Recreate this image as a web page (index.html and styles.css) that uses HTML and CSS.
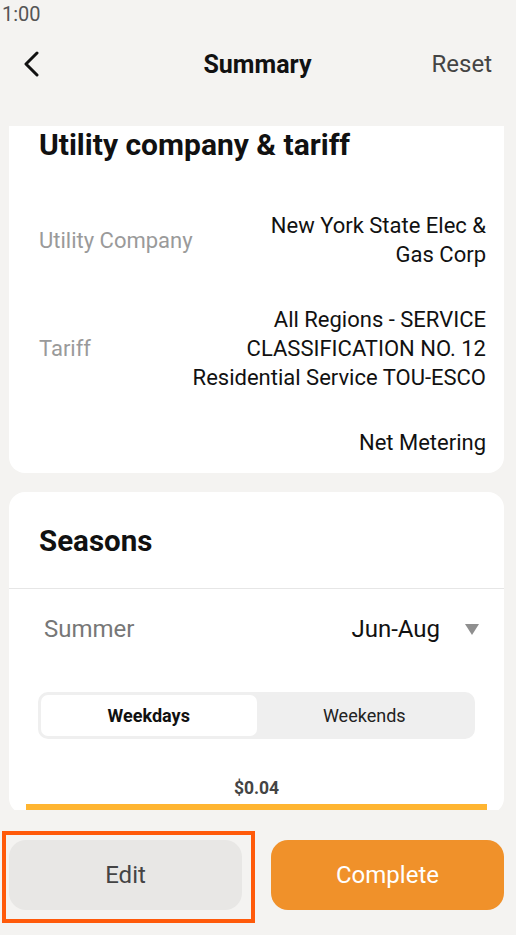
FILE: index.html
```html
<html lang="en">
<head>
    <meta charset="UTF-8">
    <meta name="viewport" content="width=device-width, initial-scale=1.0">
    <title>Summary</title>
    <link rel="stylesheet" href="styles.css">
</head>
<body>
    <div class="status">1:00</div>
    <header class="nav">
        <span class="back">
            <svg width="16" height="26" viewBox="0 0 16 26">
                <path d="M14 2 L3 13 L14 24" fill="none" stroke="#111" stroke-width="3" stroke-linecap="round" stroke-linejoin="round"/>
            </svg>
        </span>
        <h1 class="title">Summary</h1>
        <span class="reset">Reset</span>
    </header>

    <div class="scroll">
        <div class="card card-top">
            <h2 class="card-title">Utility company &amp; tariff</h2>
            <div class="row">
                <span class="label">Utility Company</span>
                <span class="value">New York State Elec &amp;<br>Gas Corp</span>
            </div>
            <div class="row">
                <span class="label">Tariff</span>
                <span class="value">All Regions - SERVICE<br>CLASSIFICATION NO. 12<br>Residential Service TOU-ESCO</span>
            </div>
            <div class="row">
                <span class="label"></span>
                <span class="value">Net Metering</span>
            </div>
        </div>

        <div class="card seasons">
            <h2 class="card-title seasons-title">Seasons</h2>
            <div class="divider"></div>
            <div class="season-row">
                <span class="season-name">Summer</span>
                <span class="season-range">Jun-Aug <i class="caret"></i></span>
            </div>
            <div class="segment">
                <div class="seg active">Weekdays</div>
                <div class="seg">Weekends</div>
            </div>
            <div class="price">$0.04</div>
            <div class="rate-bar"></div>
        </div>
    </div>

    <footer class="actions">
        <div class="btn-wrap">
            <button class="btn btn-edit">Edit</button>
            <span class="highlight"></span>
        </div>
        <div class="btn-wrap">
            <button class="btn btn-complete">Complete</button>
        </div>
    </footer>
</body>
</html>
```

FILE: styles.css
```css
*{
    box-sizing: border-box;
    margin: 0;
}
body{
    width: 516px;
    height: 935px;
    overflow: hidden;
    background: #f4f3f1;
    font-family: Roboto, "Liberation Sans", sans-serif;
    color: #111;
}
.status{
    height: 28px;
    padding: 0 0 0 2px;
    font-size: 20px;
    line-height: 28px;
    color: #555;
}
.nav{
    height: 72px;
    display: grid;
    grid-template-columns: 1fr auto 1fr;
    align-items: center;
    padding: 0 24px 0 23px;
}
.back{
    display: flex;
}
.title{
    font-size: 25px;
    font-weight: 700;
    color: #111;
}
.reset{
    font-size: 24px;
    color: #444;
    text-align: right;
}
.scroll{
    margin-top: 26px;
    height: 684px;
    overflow: hidden;
    padding: 0 12px 0 9px;
}
.card{
    background: #fff;
    border-radius: 16px;
}
.card-top{
    border-radius: 0 0 16px 16px;
    padding: 2px 18px 16px 30px;
}
.card-title{
    font-size: 30px;
    line-height: 34px;
    font-weight: 700;
    color: #111;
}
.card-top .card-title{
    margin-bottom: 49px;
}
.row{
    display: flex;
    align-items: center;
    justify-content: space-between;
    padding: 18px 0;
    font-size: 22px;
    line-height: 29px;
}
.row:first-of-type{
    padding-top: 0;
}
.row:last-child{
    padding-bottom: 0;
}
.label{
    color: #9a9a9a;
}
.value{
    text-align: right;
    color: #111;
}
.seasons{
    margin-top: 19px;
    padding-top: 32px;
}
.seasons-title{
    padding-left: 30px;
    font-size: 29.5px;
}
.divider{
    height: 1px;
    background: #e6e6e6;
    margin-top: 30px;
}
.season-row{
    display: flex;
    align-items: center;
    justify-content: space-between;
    padding: 0 25px 0 35px;
    margin-top: 24px;
    font-size: 24px;
    line-height: 32px;
}
.season-name{
    color: #777;
}
.season-range{
    display: flex;
    align-items: center;
    color: #111;
}
.caret{
    display: inline-block;
    width: 0;
    height: 0;
    margin-left: 25px;
    border-left: 7.5px solid transparent;
    border-right: 7.5px solid transparent;
    border-top: 11px solid #8f8f8f;
}
.segment{
    display: flex;
    margin: 47px 29px 0 29px;
    padding: 3px;
    height: 47px;
    background: #efefef;
    border-radius: 10px;
}
.seg{
    flex: 1;
    display: flex;
    align-items: center;
    justify-content: center;
    font-size: 18px;
    color: #222;
    border-radius: 7px;
}
.seg.active{
    background: #fff;
    font-weight: 700;
    color: #111;
}
.price{
    margin-top: 39px;
    text-align: center;
    font-size: 17.5px;
    line-height: 20px;
    font-weight: 700;
    color: #444;
}
.rate-bar{
    margin: 6px 17px 0 17px;
    height: 10px;
    background: #ffb531;
}
.actions{
    display: flex;
    gap: 29px;
    padding: 30px 12px 0 9px;
}
.btn-wrap{
    flex: 1 1 0;
    position: relative;
    display: flex;
}
.btn{
    flex: 1 1 0;
    height: 70px;
    padding: 0;
    border: none;
    border-radius: 17px;
    font-family: Roboto, "Liberation Sans", sans-serif;
    font-size: 24px;
}
.btn-edit{
    background: #e8e7e5;
    color: #444;
}
.btn-complete{
    background: #f0912a;
    color: #fff;
}
.highlight{
    position: absolute;
    left: -7px;
    top: -9px;
    width: 253px;
    height: 92px;
    border: 4px solid #ff5a0a;
}
```
